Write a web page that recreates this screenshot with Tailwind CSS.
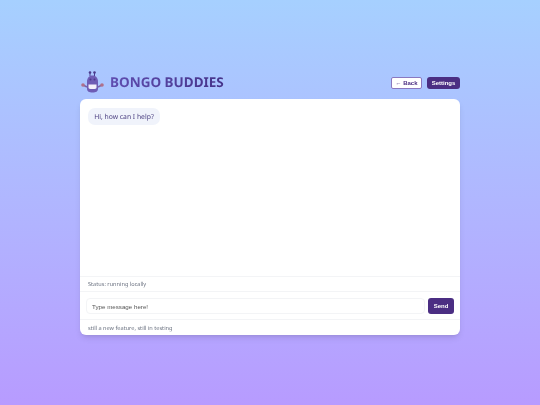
<!DOCTYPE html>
<html lang="en">
<head>
    <meta charset="UTF-8">
    <title>Bongo Buddies</title>
    <script src="https://cdn.jsdelivr.net/npm/@tailwindcss/browser@4"></script>
</head>
<body class="h-[405px] overflow-hidden bg-gradient-to-b from-[#a6d0ff] to-[#b79bff] font-['Noto_Sans',sans-serif] [text-rendering:geometricPrecision]">
    <div class="mx-auto w-[380px] pt-[69px] [will-change:transform]">
        <!-- Header -->
        <div class="flex h-[27px] items-center justify-between">
            <div class="flex items-center gap-[5px]">
                <svg width="25" height="24" viewBox="0 0 25 24">
                    <path d="M3 14l4 2M22 14l-4 2" stroke="#7a62a8" stroke-width="1.5"/>
                    <circle cx="3" cy="14" r="1.8" fill="#b0708a"/>
                    <circle cx="22" cy="14" r="1.8" fill="#b0708a"/>
                    <circle cx="10" cy="1.500" r="1.300" fill="#4a3a8c"/>
                    <circle cx="14.500" cy="1.500" r="1.300" fill="#4a3a8c"/>
                    <path d="M10 2v3M14.500 2v3" stroke="#4a3a8c" stroke-width="1"/>
                    <path d="M12.500 4.500c3.500 0 5.500 2.500 5.500 6.500v6.500c0 3-2 4-5.500 4s-5.500-1-5.500-4v-6.500c0-4 2-6.500 5.500-6.500z" fill="#6e5cb5"/>
                    <circle cx="10.500" cy="8.500" r="1" fill="#4a3a8c"/>
                    <circle cx="14.500" cy="8.500" r="1" fill="#4a3a8c"/>
                    <path d="M8.500 13.500h8v3c0 1-1 1.500-4 1.500s-4-.5-4-1.500z" fill="#f3effa"/>
                </svg>
                <span class="bg-gradient-to-r from-[#5f4db0] to-[#46338a] bg-clip-text text-[13.500px] leading-none font-bold text-transparent">BONGO BUDDIES</span>
            </div>
            <div class="mt-[1px] flex items-center gap-[5px] font-['Liberation_Sans',sans-serif] text-[6px] font-bold">
                <button class="h-[12px] w-[31px] rounded-[2px] border border-[#8a78c0] bg-white text-[#4b2e83]">← Back</button>
                <button class="h-[12px] w-[33px] rounded-[3px] bg-[#4b2e83] text-white">Settings</button>
            </div>
        </div>

        <!-- Chat card -->
        <div class="mt-[3px] flex h-[236px] flex-col rounded-[6px] bg-white shadow-md">
            <div class="flex-1 p-[8px] pt-[9px]">
                <div class="flex h-[17px] w-[72px] items-center justify-center rounded-[7px] bg-[#f0f3fb] pt-[1px] text-[6.800px] text-[#4b3f80]">Hi, how can I help?</div>
            </div>
            <div class="flex h-[15px] items-center border-t border-[#f3f4f6] px-[8px] pt-[1px] text-[5.600px] text-[#6b7280]">Status: running locally</div>
            <div class="flex h-[29px] items-center gap-[3px] border-y border-[#f3f4f6] px-[6px] pt-[1px]">
                <input class="h-[16px] flex-1 rounded-[4px] border border-[#f3f4f6] px-[5px] font-['Liberation_Sans',sans-serif] text-[6.200px] placeholder:text-[#555]" placeholder="Type message here!">
                <button class="h-[16px] w-[26px] rounded-[3px] bg-[#4b2e83] font-['Liberation_Sans',sans-serif] text-[6px] font-bold text-white">Send</button>
            </div>
            <div class="flex h-[15px] items-center px-[8px] pt-[1px] text-[5.600px] text-[#6b7280]">still a new feature, still in testing</div>
        </div>
    </div>
</body>
</html>
